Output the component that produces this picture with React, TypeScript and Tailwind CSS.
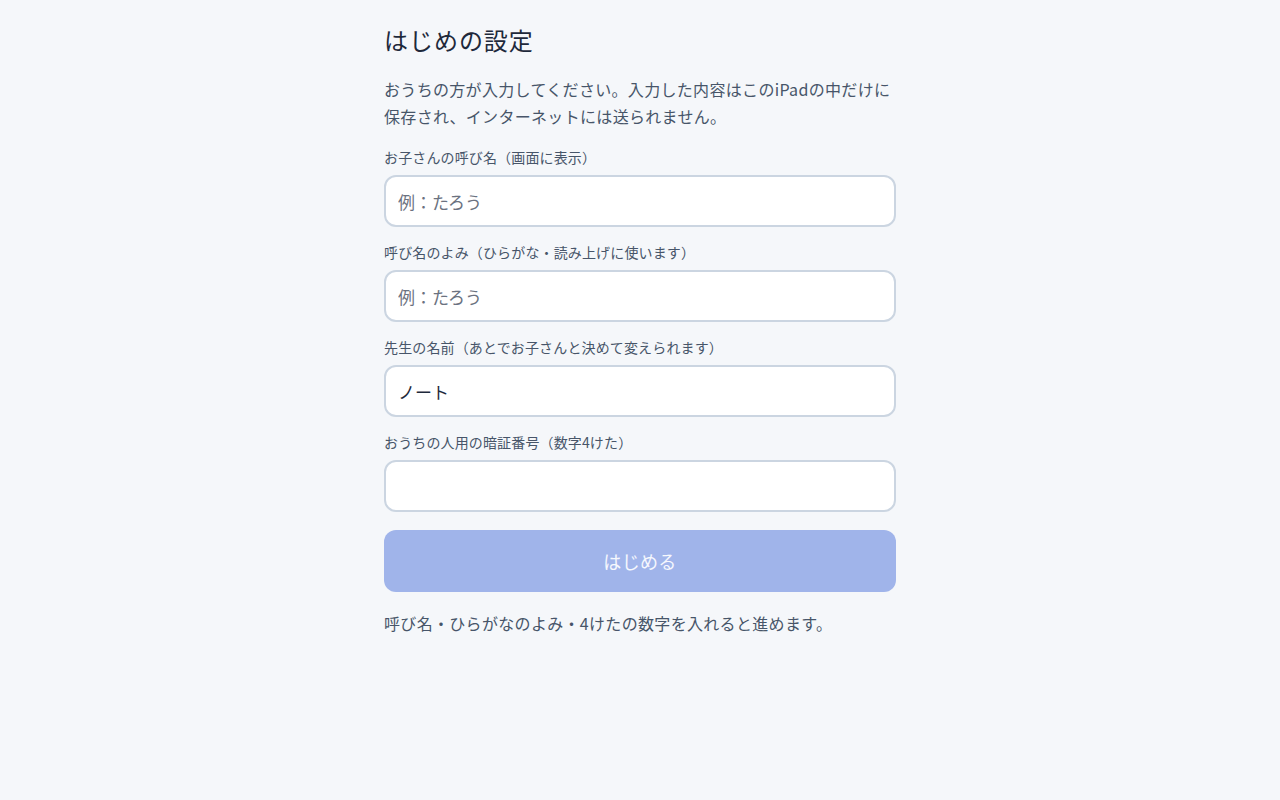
import { useState } from 'react'

const fields = [
  { label: 'お子さんの呼び名（画面に表示）', placeholder: '例：たろう', initial: '' },
  { label: '呼び名のよみ（ひらがな・読み上げに使います）', placeholder: '例：たろう', initial: '' },
  { label: '先生の名前（あとでお子さんと決めて変えられます）', placeholder: '', initial: 'ノート' },
  { label: 'おうちの人用の暗証番号（数字4けた）', placeholder: '', initial: '' },
]

export default function App() {
  const [values, setValues] = useState(fields.map((f) => f.initial))

  return (
    <div
      className="min-h-screen bg-[#f5f7fa] text-[#1e293b]"
      style={{ fontFamily: '"Noto Sans CJK JP", "Noto Sans", sans-serif' }}
    >
      <div className="mx-auto w-[512px] pt-6">
        <h1 className="text-2xl leading-8 tracking-[0.04em] text-[#1e293b]">はじめの設定</h1>
        <p className="mt-5 text-base leading-[27px] tracking-[0.02em] text-[#475569]">
          おうちの方が入力してください。入力した内容はこのiPadの中だけに保存され、インターネットには送られません。
        </p>

        <div className="mt-[17px] flex flex-col gap-[15px]">
          {fields.map((f, i) => (
            <label key={i} className="flex flex-col gap-2">
              <span className="text-sm leading-5 tracking-[0.01em] text-[#475569]">{f.label}</span>
              <input
                value={values[i]}
                placeholder={f.placeholder}
                onChange={(e) => {
                  const next = [...values]
                  next[i] = e.target.value
                  setValues(next)
                }}
                className="h-[52px] rounded-xl border-2 border-[#cbd5e1] bg-white px-3 text-[17px] text-[#1e293b] outline-none placeholder:text-[#6b7280]"
              />
            </label>
          ))}
        </div>

        <button
          disabled
          className="mt-[18px] h-[62px] w-full rounded-xl bg-[#a0b4ea] text-lg tracking-[0.02em] text-white/90"
        >
          はじめる
        </button>

        <p className="mt-[19px] text-base leading-6 tracking-[0.02em] text-[#475569]">
          呼び名・ひらがなのよみ・4けたの数字を入れると進めます。
        </p>
      </div>
    </div>
  )
}
